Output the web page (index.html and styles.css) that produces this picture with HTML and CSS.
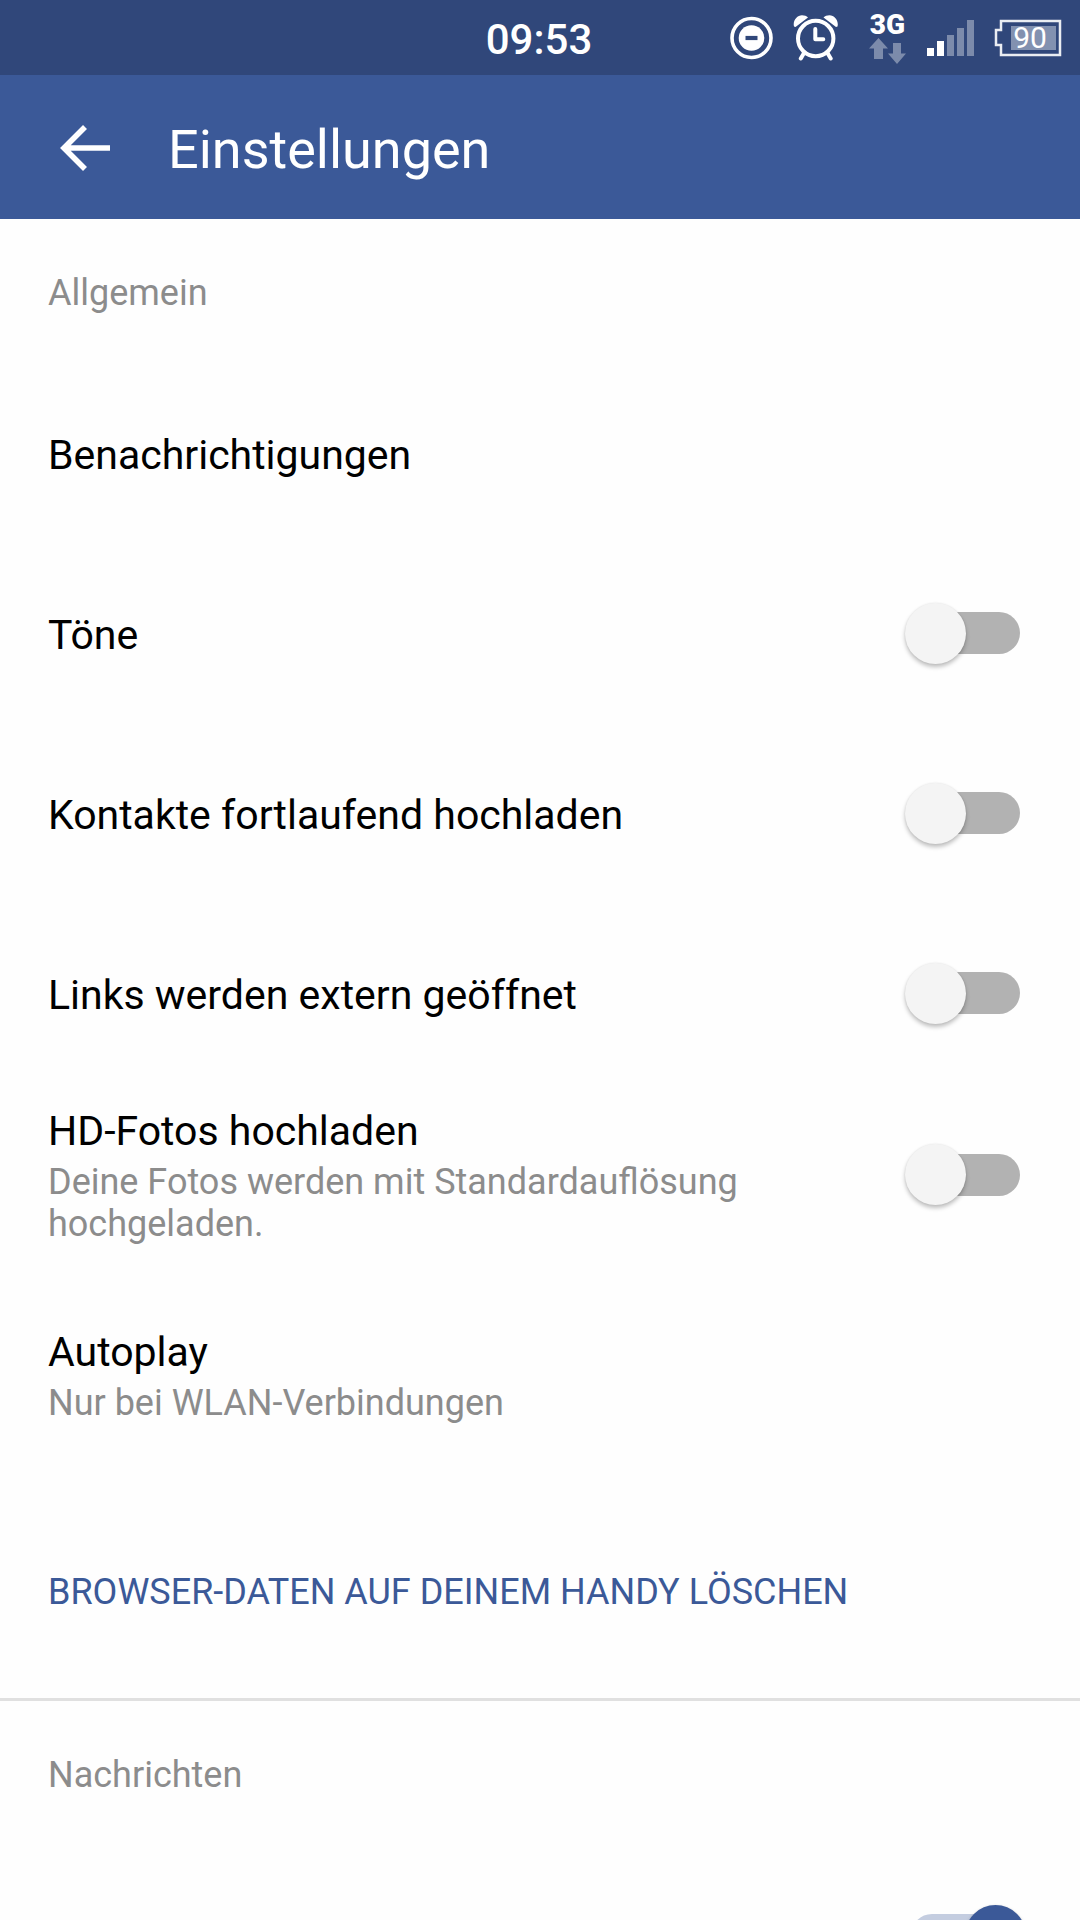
FILE: index.html
```html
<!DOCTYPE html>
<html lang="de">
<head>
<meta charset="utf-8">
<meta name="viewport" content="width=device-width, initial-scale=1">
<title>Einstellungen</title>
<link rel="stylesheet" href="styles.css">
</head>
<body>
<div class="statusbar">
  <time class="clock">09:53</time>
  <div class="status-icons">
    <svg class="icon-dnd" width="43" height="44" viewBox="0 0 43 44" aria-hidden="true">
      <circle cx="21.500" cy="22" r="19.500" fill="none" stroke="#fff" stroke-width="3.600"/>
      <circle cx="21.500" cy="22" r="12.800" fill="#fff"/>
      <path d="M15.500 22h12" stroke="#30477a" stroke-width="4.200"/>
    </svg>
    <svg class="icon-alarm" width="46" height="46" viewBox="0 0 46 46" fill="none" stroke="#fff" aria-hidden="true">
      <circle cx="22.700" cy="23.500" r="17.700" stroke-width="4"/>
      <path d="M22.300 14v10.200h8" stroke-width="4" stroke-linecap="round" stroke-linejoin="round"/>
      <path d="M11 38l-3.200 5.500M34.500 38l3.200 5.500" stroke-width="4" stroke-linecap="round"/>
      <path d="M1 11.500C-.5 6 4 .300 9 .300c2.500 0 4.500.700 6 2.200L2.500 12zM44.500 11.500C46 6 41.500.300 36.500.300c-2.500 0-4.500.700-6 2.200L43 12z" fill="#fff" stroke="none"/>
    </svg>
    <div class="network">
      <span class="network-type">3G</span>
      <svg width="38" height="26" viewBox="0 0 38 26" fill="#7c8bab" aria-hidden="true">
        <path d="M9.500 0L19 10.500h-5V21H5V10.500H0zM24 5h8v10.500h5L28 26 19 15.500h5z"/>
      </svg>
    </div>
    <svg class="icon-signal" width="47" height="36" viewBox="0 0 47 36" aria-hidden="true">
      <path d="M0 28h7v8H0zM10 21h7v15h-7z" fill="#fff"/>
      <path d="M20 15h7v21h-7zM30 8h7v28h-7zM40 0h7v36h-7z" fill="#7c8bab"/>
    </svg>
    <div class="battery">
      <svg class="battery-shape" width="68" height="38" viewBox="0 0 68 38" aria-hidden="true">
        <path d="M7 2h59v34H7V26H2V11h5z" fill="none" stroke="#fff" stroke-opacity=".9" stroke-width="2.500"/>
        <path d="M17 7h45v24H17z" fill="#8291b0"/>
      </svg>
      <span class="battery-level">90</span>
    </div>
  </div>
</div>

<header class="toolbar">
  <button class="back" type="button" aria-label="Zurück">
    <svg width="50" height="46" viewBox="0 0 50 46" fill="none" stroke="#fff" aria-hidden="true">
      <path d="M50 23H4M25 2L4 23l21 21" stroke-width="5.600"/>
    </svg>
  </button>
  <h1 class="title">Einstellungen</h1>
</header>

<main class="content">
  <section class="group">
    <h2 class="group-title">Allgemein</h2>
    <button class="row" type="button"><span class="name">Benachrichtigungen</span></button>
    <label class="row"><span class="name">Töne</span><input class="switch" type="checkbox"></label>
    <label class="row"><span class="name">Kontakte fortlaufend hochladen</span><input class="switch" type="checkbox"></label>
    <label class="row"><span class="name">Links werden extern geöffnet</span><input class="switch" type="checkbox"></label>
    <label class="row row-detail">
      <span class="text"><span class="name">HD-Fotos hochladen</span><span class="detail">Deine Fotos werden mit Standardauflösung hochgeladen.</span></span>
      <input class="switch" type="checkbox">
    </label>
    <button class="row row-tall" type="button">
      <span class="text"><span class="name">Autoplay</span><span class="detail">Nur bei WLAN-Verbindungen</span></span>
    </button>
    <button class="row row-tall action" type="button"><span class="name">BROWSER-DATEN AUF DEINEM HANDY LÖSCHEN</span></button>
  </section>
  <section class="group">
    <h2 class="group-title">Nachrichten</h2>
    <div class="row"><input class="switch" type="checkbox" aria-label="Nachrichten" checked></div>
  </section>
</main>
</body>
</html>
```
FILE: styles.css
```css
* {
  box-sizing: border-box;
}

body {
  margin: 0;
  height: 100vh;
  display: flex;
  flex-direction: column;
  overflow: hidden;
  background: #fefefe;
  color: #000;
  font-family: Roboto, "Noto Sans", sans-serif;
  font-size: 41px;
}

button {
  margin: 0;
  border: 0;
  background: none;
  color: inherit;
  font: inherit;
  text-align: left;
}

svg {
  display: block;
}

/* Status bar */

.statusbar {
  flex: none;
  height: 75px;
  padding: 0 18px 0 16px;
  display: grid;
  grid-template-columns: 1fr auto 1fr;
  align-items: center;
  background: #30477a;
  color: #fff;
}

.clock {
  grid-column: 2;
  padding-top: 4px;
  font-size: 42px;
  font-weight: 500;
}

.status-icons {
  display: flex;
  align-items: center;
  justify-content: flex-end;
  gap: 20px;
}

.network {
  width: 48px;
  display: flex;
  flex-direction: column;
  align-items: flex-end;
}

.network-type {
  padding-right: 2px;
  font-size: 28px;
  line-height: 26px;
  font-weight: 900;
}

.battery {
  display: grid;
  place-items: center;
}

.battery > * {
  grid-area: 1 / 1;
}

.battery-level {
  padding-left: 4px;
  font-size: 30px;
  line-height: 38px;
}

/* Toolbar */

.toolbar {
  flex: none;
  height: 144px;
  padding: 0 48px;
  display: flex;
  align-items: center;
  gap: 46px;
  background: #3b5998;
  color: #fff;
}

.back {
  padding: 14px 12px 12px;
}

.title {
  margin: 0;
  padding-top: 4px;
  font-size: 54px;
  font-weight: 400;
}

/* Settings list */

.content {
  flex: 1;
  min-height: 0;
  overflow: hidden auto;
  scrollbar-width: none;
}

.group + .group {
  border-top: 3px solid #e0e0e0;
}

.group-title {
  height: 144px;
  margin: 0;
  padding: 4px 48px 0;
  display: flex;
  align-items: center;
  color: #8c8c8c;
  font-size: 36px;
  font-weight: 400;
}

.row {
  width: 100%;
  min-height: 180px;
  padding: 0 54px 0 48px;
  display: flex;
  align-items: center;
  gap: 48px;
}

.row-detail {
  min-height: 183px;
}

.row-tall {
  min-height: 216px;
}

.text {
  display: flex;
  flex-direction: column;
  gap: 6px;
}

.name {
  padding-top: 3px;
  line-height: 48px;
}

.detail {
  color: #8c8c8c;
  font-size: 36px;
  line-height: 42px;
}

.action {
  color: #3b5998;
  font-size: 36px;
}

/* Track and thumb share one grid cell */

.switch {
  appearance: none;
  flex: none;
  width: 121px;
  height: 61px;
  margin: 0 0 0 auto;
  display: grid;
  align-items: center;
}

.switch::before,
.switch::after {
  content: "";
  grid-area: 1 / 1;
}

.switch::before {
  height: 42px;
  margin: 0 6px;
  border-radius: 21px;
  background: #b2b2b2;
}

.switch::after {
  width: 61px;
  height: 61px;
  border-radius: 50%;
  background: #f4f4f4;
  box-shadow: 0 3px 4px rgba(0, 0, 0, 0.25), 0 0 2px rgba(0, 0, 0, 0.08);
}

.switch:checked::before {
  background: #c4cde0;
}

.switch:checked::after {
  justify-self: end;
  background: #3b5998;
}
```
